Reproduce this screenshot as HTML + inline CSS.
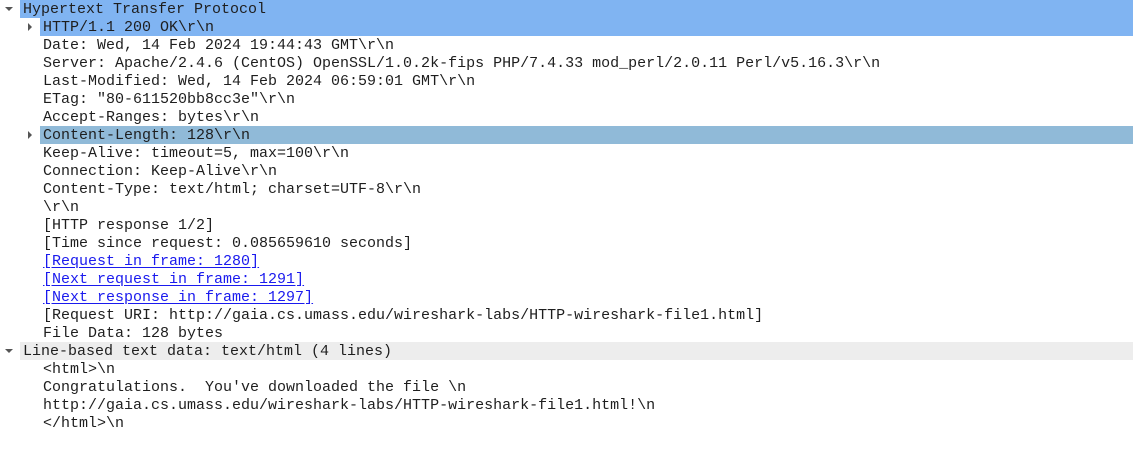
<!DOCTYPE html>
<html><head><meta charset="utf-8"><style>
body{margin:0;width:1133px;height:449px;background:#fff;overflow:hidden;font-family:"Liberation Mono",monospace;font-size:15px;color:#1e1e1e}
.r{position:absolute;left:0;width:1133px;height:18px;line-height:18px;white-space:pre}
.t{position:absolute;top:1px}
.hl{position:absolute;top:0;height:18px;right:0}
a{color:#1a1aee;text-decoration:underline;text-underline-offset:2px}
.ar{position:absolute;width:0;height:0}
.dn{border-left:4px solid transparent;border-right:4px solid transparent;border-top:4px solid #555;top:7px}
.rt{border-top:4px solid transparent;border-bottom:4px solid transparent;border-left:4px solid #555;top:5px}
</style></head><body>
<div class="r" style="top:0"><div class="hl" style="left:20px;background:#80b4f2"></div><div class="ar dn" style="left:5px"></div><span class="t" style="left:23px">Hypertext Transfer Protocol</span></div>
<div class="r" style="top:18px"><div class="hl" style="left:40px;background:#80b4f2"></div><div class="ar rt" style="left:28px"></div><span class="t" style="left:43px">HTTP/1.1 200 OK\r\n</span></div>
<div class="r" style="top:36px"><span class="t" style="left:43px">Date: Wed, 14 Feb 2024 19:44:43 GMT\r\n</span></div>
<div class="r" style="top:54px"><span class="t" style="left:43px">Server: Apache/2.4.6 (CentOS) OpenSSL/1.0.2k-fips PHP/7.4.33 mod_perl/2.0.11 Perl/v5.16.3\r\n</span></div>
<div class="r" style="top:72px"><span class="t" style="left:43px">Last-Modified: Wed, 14 Feb 2024 06:59:01 GMT\r\n</span></div>
<div class="r" style="top:90px"><span class="t" style="left:43px">ETag: "80-611520bb8cc3e"\r\n</span></div>
<div class="r" style="top:108px"><span class="t" style="left:43px">Accept-Ranges: bytes\r\n</span></div>
<div class="r" style="top:126px"><div class="hl" style="left:40px;background:#90bad8"></div><div class="ar rt" style="left:28px"></div><span class="t" style="left:43px">Content-Length: 128\r\n</span></div>
<div class="r" style="top:144px"><span class="t" style="left:43px">Keep-Alive: timeout=5, max=100\r\n</span></div>
<div class="r" style="top:162px"><span class="t" style="left:43px">Connection: Keep-Alive\r\n</span></div>
<div class="r" style="top:180px"><span class="t" style="left:43px">Content-Type: text/html; charset=UTF-8\r\n</span></div>
<div class="r" style="top:198px"><span class="t" style="left:43px">\r\n</span></div>
<div class="r" style="top:216px"><span class="t" style="left:43px">[HTTP response 1/2]</span></div>
<div class="r" style="top:234px"><span class="t" style="left:43px">[Time since request: 0.085659610 seconds]</span></div>
<div class="r" style="top:252px"><span class="t" style="left:43px"><a>[Request in frame: 1280]</a></span></div>
<div class="r" style="top:270px"><span class="t" style="left:43px"><a>[Next request in frame: 1291]</a></span></div>
<div class="r" style="top:288px"><span class="t" style="left:43px"><a>[Next response in frame: 1297]</a></span></div>
<div class="r" style="top:306px"><span class="t" style="left:43px">[Request URI: http://gaia.cs.umass.edu/wireshark-labs/HTTP-wireshark-file1.html]</span></div>
<div class="r" style="top:324px"><span class="t" style="left:43px">File Data: 128 bytes</span></div>
<div class="r" style="top:342px"><div class="hl" style="left:20px;background:#ededed"></div><div class="ar dn" style="left:5px"></div><span class="t" style="left:23px">Line-based text data: text/html (4 lines)</span></div>
<div class="r" style="top:360px"><span class="t" style="left:43px">&lt;html&gt;\n</span></div>
<div class="r" style="top:378px"><span class="t" style="left:43px">Congratulations.  You've downloaded the file \n</span></div>
<div class="r" style="top:396px"><span class="t" style="left:43px">http://gaia.cs.umass.edu/wireshark-labs/HTTP-wireshark-file1.html!\n</span></div>
<div class="r" style="top:414px"><span class="t" style="left:43px">&lt;/html&gt;\n</span></div>
</body></html>
